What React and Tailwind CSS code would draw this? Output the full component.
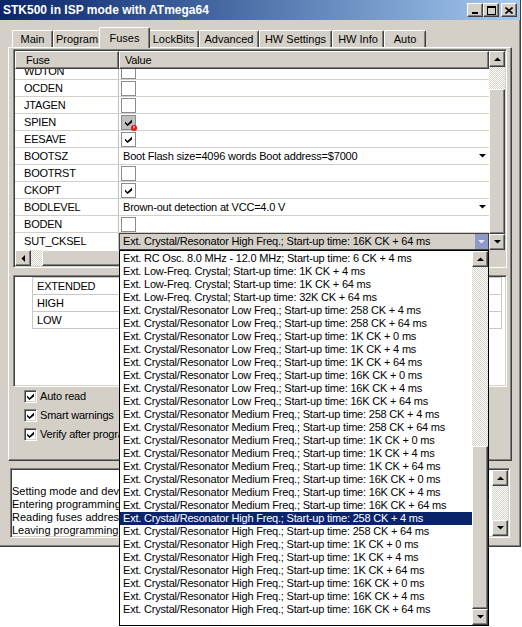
import React from "react";

// classic 3D bevels
const RAISED =
  "border border-t-white border-l-white border-r-[#404040] border-b-[#404040] shadow-[inset_-1px_-1px_#808080,inset_1px_1px_#d4d0c8]";
const SUNKEN =
  "border border-t-[#808080] border-l-[#808080] border-r-white border-b-white shadow-[inset_1px_1px_#404040,inset_-1px_-1px_#d4d0c8]";
const DITHER =
  "bg-[repeating-conic-gradient(#d4d0c8_0%_25%,#ffffff_0%_50%)] bg-[length:2px_2px]";

const Arrow = ({ dir = "down", color = "#000" }) => {
  if (dir === "left" || dir === "right") {
    const pts = dir === "left" ? "4,0 4,7 0.5,3.5" : "0,0 0,7 3.5,3.5";
    return (
      <svg width="4" height="7" viewBox="0 0 4 7">
        <polygon points={pts} fill={color} />
      </svg>
    );
  }
  const pts = dir === "up" ? "0,4 7,4 3.5,0.5" : "0,0 7,0 3.5,3.5";
  return (
    <svg width="7" height="4" viewBox="0 0 7 4">
      <polygon points={pts} fill={color} />
    </svg>
  );
};

const Check = () => (
  <svg width="7" height="7" viewBox="0 0 7 7">
    <polygon points="0,2.5 2.5,5 7,0.5 7,3.5 2.5,7 0,4.5" fill="#000" />
  </svg>
);

const ScrollButton = ({ dir }) => (
  <div
    className={`w-[16px] h-[16px] shrink-0 bg-[#d4d0c8] flex items-center justify-center ${RAISED}`}
  >
    <Arrow dir={dir} />
  </div>
);

const Thumb = ({ className = "" }) => (
  <div className={`shrink-0 bg-[#d4d0c8] ${RAISED} ${className}`} />
);

const CapButton = ({ children }) => (
  <div
    className={`w-[16px] h-[14px] bg-[#d4d0c8] flex items-center justify-center ${RAISED}`}
  >
    {children}
  </div>
);

const TABS = [
  { label: "Main", w: "w-[41px]" },
  { label: "Program", w: "w-[48px]" },
  { label: "Fuses", w: "w-[51px]", active: true },
  { label: "LockBits", w: "w-[51px]" },
  { label: "Advanced", w: "w-[60px]" },
  { label: "HW Settings", w: "w-[73px]" },
  { label: "HW Info", w: "w-[52px]" },
  { label: "Auto", w: "w-[42px]" },
];

const FUSES = [
  { name: "WDTON", kind: "check" },
  { name: "OCDEN", kind: "check" },
  { name: "JTAGEN", kind: "check" },
  { name: "SPIEN", kind: "check", checked: true, locked: true },
  { name: "EESAVE", kind: "check", checked: true },
  { name: "BOOTSZ", kind: "combo", value: "Boot Flash size=4096 words Boot address=$7000" },
  { name: "BOOTRST", kind: "check" },
  { name: "CKOPT", kind: "check", checked: true },
  { name: "BODLEVEL", kind: "combo", value: "Brown-out detection at VCC=4.0 V" },
  { name: "BODEN", kind: "check" },
  {
    name: "SUT_CKSEL",
    kind: "open",
    value: "Ext. Crystal/Resonator High Freq.; Start-up time: 16K CK + 64 ms",
  },
];

const OPTIONS = [
  "Ext. RC Osc. 8.0 MHz - 12.0 MHz; Start-up time: 6 CK + 4 ms",
  "Ext. Low-Freq. Crystal; Start-up time: 1K CK + 4 ms",
  "Ext. Low-Freq. Crystal; Start-up time: 1K CK + 64 ms",
  "Ext. Low-Freq. Crystal; Start-up time: 32K CK + 64 ms",
  "Ext. Crystal/Resonator Low Freq.; Start-up time: 258 CK + 4 ms",
  "Ext. Crystal/Resonator Low Freq.; Start-up time: 258 CK + 64 ms",
  "Ext. Crystal/Resonator Low Freq.; Start-up time: 1K CK + 0 ms",
  "Ext. Crystal/Resonator Low Freq.; Start-up time: 1K CK + 4 ms",
  "Ext. Crystal/Resonator Low Freq.; Start-up time: 1K CK + 64 ms",
  "Ext. Crystal/Resonator Low Freq.; Start-up time: 16K CK + 0 ms",
  "Ext. Crystal/Resonator Low Freq.; Start-up time: 16K CK + 4 ms",
  "Ext. Crystal/Resonator Low Freq.; Start-up time: 16K CK + 64 ms",
  "Ext. Crystal/Resonator Medium Freq.; Start-up time: 258 CK + 4 ms",
  "Ext. Crystal/Resonator Medium Freq.; Start-up time: 258 CK + 64 ms",
  "Ext. Crystal/Resonator Medium Freq.; Start-up time: 1K CK + 0 ms",
  "Ext. Crystal/Resonator Medium Freq.; Start-up time: 1K CK + 4 ms",
  "Ext. Crystal/Resonator Medium Freq.; Start-up time: 1K CK + 64 ms",
  "Ext. Crystal/Resonator Medium Freq.; Start-up time: 16K CK + 0 ms",
  "Ext. Crystal/Resonator Medium Freq.; Start-up time: 16K CK + 4 ms",
  "Ext. Crystal/Resonator Medium Freq.; Start-up time: 16K CK + 64 ms",
  "Ext. Crystal/Resonator High Freq.; Start-up time: 258 CK + 4 ms",
  "Ext. Crystal/Resonator High Freq.; Start-up time: 258 CK + 64 ms",
  "Ext. Crystal/Resonator High Freq.; Start-up time: 1K CK + 0 ms",
  "Ext. Crystal/Resonator High Freq.; Start-up time: 1K CK + 4 ms",
  "Ext. Crystal/Resonator High Freq.; Start-up time: 1K CK + 64 ms",
  "Ext. Crystal/Resonator High Freq.; Start-up time: 16K CK + 0 ms",
  "Ext. Crystal/Resonator High Freq.; Start-up time: 16K CK + 4 ms",
  "Ext. Crystal/Resonator High Freq.; Start-up time: 16K CK + 64 ms",
];

const SELECTED = 20;

const LOG = [
  "Setting mode and device parameters.. OK!",
  "Entering programming mode.. OK!",
  "Reading fuses address 0 to 2.. 0xFF, 0xC9, 0xAF .. OK!",
  "Leaving programming mode.. OK!",
];

const FuseValue = ({ fuse }) => {
  if (fuse.kind === "check") {
    return (
      <div
        className={`relative mt-[1px] ml-[2px] w-[15px] h-[15px] border border-[#8c8c8c] flex items-center justify-center ${
          fuse.locked ? "bg-[#c0c0c0]" : "bg-white"
        }`}
      >
        {fuse.checked && <Check />}
        {fuse.locked && (
          <svg className="absolute right-[-2px] bottom-[-2px]" width="6" height="6" viewBox="0 0 6 6">
            <circle cx="3" cy="3" r="3" fill="#e01818" />
            <rect x="2.4" y="1" width="1.2" height="2.4" fill="#ffd0d0" />
          </svg>
        )}
      </div>
    );
  }
  if (fuse.kind === "combo") {
    return (
      <div className="flex-1 flex items-center justify-between h-[16px] pl-[4px] pr-[3px]">
        <span className="whitespace-nowrap">{fuse.value}</span>
        <Arrow dir="down" />
      </div>
    );
  }
  return (
    <div className="flex-1 flex h-[17px] border border-[#404040] bg-[#d4d0c8]">
      <span className="flex-1 pl-[3px] leading-[15px] whitespace-nowrap overflow-hidden">
        {fuse.value}
      </span>
      <div className="w-[13px] h-full bg-[#8d9ac8] flex items-center justify-center">
        <Arrow dir="down" color="#e4e8f4" />
      </div>
    </div>
  );
};

const ClassicCheckbox = ({ label }) => (
  <div className="flex items-center h-[19px] pl-[11px]">
    <div className={`w-[13px] h-[13px] bg-white flex items-center justify-center ${SUNKEN}`}>
      <Check />
    </div>
    <span className="ml-[3px] whitespace-nowrap">{label}</span>
  </div>
);

export default function App() {
  return (
    <div className="relative w-[522px] h-[627px] bg-white overflow-hidden font-['Liberation_Sans',Arial,sans-serif] text-[11px] text-black">
      {/* Window */}
      <div className="w-[521px] h-[547px] bg-[#d4d0c8] border-r border-b border-[#404040] shadow-[inset_-1px_-1px_#808080] flex flex-col">
        {/* Title bar */}
        <div className="h-[20px] shrink-0 flex items-center pl-[3px] pr-[3px] bg-linear-to-r from-[#0a246a] to-[#a6caf0]">
          <span className="flex-1 text-white font-bold text-[12px] whitespace-nowrap">
            STK500 in ISP mode with ATmega64
          </span>
          <CapButton>
            <svg width="8" height="8" viewBox="0 0 8 8">
              <rect x="1" y="6" width="6" height="2" fill="#000" />
            </svg>
          </CapButton>
          <CapButton>
            <svg width="9" height="9" viewBox="0 0 9 9">
              <rect x="0" y="0" width="9" height="2" fill="#000" />
              <rect x="0.5" y="0.5" width="8" height="8" fill="none" stroke="#000" />
            </svg>
          </CapButton>
          <div className="ml-[2px]">
            <CapButton>
              <svg width="8" height="7" viewBox="0 0 8 7">
                <path d="M0.5 0.5 L7.5 6.5 M7.5 0.5 L0.5 6.5" stroke="#000" strokeWidth="1.6" />
              </svg>
            </CapButton>
          </div>
        </div>

        <div className="pl-[8px] pr-[8px]">
          {/* Tabs */}
          <div className="h-[27px] flex items-end pl-[4px]">
            {TABS.map((t) =>
              t.active ? (
                <div
                  key={t.label}
                  className={`${t.w} -mx-[2px] h-[21px] -mb-px relative z-10 bg-[#d4d0c8] border-t border-l border-r border-t-white border-l-white border-r-[#404040] shadow-[inset_-1px_0_#808080] rounded-t-[2px] flex items-center justify-center`}
                >
                  {t.label}
                </div>
              ) : (
                <div
                  key={t.label}
                  className={`${t.w} h-[17px] bg-[#d4d0c8] border-t border-l border-r border-t-white border-l-white border-r-[#404040] shadow-[inset_-1px_0_#808080] rounded-t-[2px] flex items-center justify-center`}
                >
                  {t.label}
                </div>
              )
            )}
          </div>

          {/* Tab page */}
          <div className="h-[414px] border border-t-white border-l-white border-r-[#404040] border-b-[#404040] shadow-[inset_-1px_-1px_#808080] pt-[1px] px-[4px] tracking-[-0.2px]">
            {/* Fuse grid */}
            <div className={`h-[219px] p-[1px] bg-white flex flex-col ${SUNKEN}`}>
              <div className="flex h-[199px]">
                <div className="w-[474px] flex flex-col">
                  <div className="flex h-[18px] shrink-0">
                    <div className={`w-[104px] bg-[#d4d0c8] pl-[10px] leading-[16px] ${RAISED}`}>Fuse</div>
                    <div className={`flex-1 bg-[#d4d0c8] pl-[5px] leading-[16px] ${RAISED}`}>Value</div>
                  </div>
                  <div className="h-[181px] overflow-hidden">
                    <div className="-mt-[6px]">
                      {FUSES.map((f) => (
                        <div
                          key={f.name}
                          className={`flex h-[17px] ${f.kind === "open" ? "" : "border-b border-[#d4d0c8]"}`}
                        >
                          <div className="w-[104px] shrink-0 border-r border-[#c0c0c0] pl-[9px] leading-[16px]">
                            {f.name}
                          </div>
                          <FuseValue fuse={f} />
                        </div>
                      ))}
                    </div>
                  </div>
                </div>
                <div className="w-[16px] flex flex-col">
                  <ScrollButton dir="up" />
                  <div className={`h-[22px] ${DITHER}`} />
                  <Thumb className="h-[145px]" />
                  <ScrollButton dir="down" />
                </div>
              </div>
              <div className="flex h-[16px]">
                <div className="w-[474px] flex">
                  <ScrollButton dir="left" />
                  <div className={`w-[11px] ${DITHER}`} />
                  <Thumb className="w-[330px]" />
                  <div className={`flex-1 ${DITHER}`} />
                  <ScrollButton dir="right" />
                </div>
                <div className="w-[16px] bg-[#d4d0c8]" />
              </div>
            </div>

            {/* Fuse register box */}
            <div className={`mt-[7px] h-[112px] p-[1px] bg-white ${SUNKEN}`}>
              <div className="ml-[17px] w-[470px] border-t border-l border-[#c8c8c8]">
                {["EXTENDED", "HIGH", "LOW"].map((reg) => (
                  <div key={reg} className="flex h-[17px] border-b border-[#c8c8c8]">
                    <div className="w-[88px] border-r border-[#c8c8c8] pl-[4px] leading-[16px]">{reg}</div>
                    <div className="flex-1 border-r border-[#c8c8c8]" />
                  </div>
                ))}
              </div>
            </div>

            <div className="flex flex-col">
              <ClassicCheckbox label="Auto read" />
              <ClassicCheckbox label="Smart warnings" />
              <ClassicCheckbox label="Verify after programming" />
            </div>
          </div>
        </div>

        {/* Log */}
        <div className={`mt-[7px] ml-[10px] w-[500px] h-[70px] p-[1px] bg-white flex ${SUNKEN}`}>
          <div className="flex-1 pt-[15px] leading-[13px] overflow-hidden">
            {LOG.map((l) => (
              <div key={l} className="whitespace-nowrap">
                {l}
              </div>
            ))}
          </div>
          <div className="w-[16px] flex flex-col">
            <ScrollButton dir="up" />
            <div className={`flex-1 ${DITHER}`} />
            <ScrollButton dir="down" />
          </div>
        </div>
      </div>

      {/* Open dropdown list */}
      <div className="absolute left-[119px] top-[250px] w-[370px] h-[376px] border border-black bg-white flex tracking-[-0.2px]">
        <div className="flex-1 min-w-0 pt-[1px]">
          {OPTIONS.map((o, i) => (
            <div
              key={o}
              className={`h-[13px] leading-[13px] pl-[3px] whitespace-nowrap overflow-hidden ${
                i === SELECTED ? "bg-[#0a246a] text-white" : ""
              }`}
            >
              {o}
            </div>
          ))}
        </div>
        <div className="w-[16px] flex flex-col">
          <ScrollButton dir="up" />
          <div className={`flex-1 ${DITHER}`} />
          <Thumb className="h-[163px]" />
          <ScrollButton dir="down" />
        </div>
      </div>
    </div>
  );
}
